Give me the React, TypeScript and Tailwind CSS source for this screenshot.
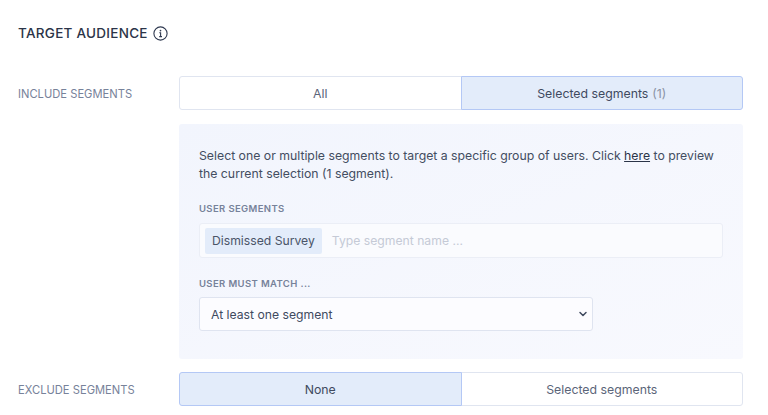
import { ChevronDown } from "lucide-react";

type ToggleOption = {
  label: string;
  count?: string;
  active?: boolean;
};

function Toggle({ options }: { options: ToggleOption[] }) {
  return (
    <div className="flex h-[34px] w-[564px]">
      {options.map((option, index) => (
        <div
          key={option.label}
          className={[
            "flex flex-1 items-center justify-center border pt-[2px] text-[12.3px]",
            index === 0 ? "rounded-l-[3px]" : "-ml-px rounded-r-[3px]",
            option.active
              ? "z-10 border-[#b4c8f5] bg-[#e3ecfa] text-[#3f4a5f]"
              : "border-[#e0e5f0] bg-white text-[#5b6579]",
          ].join(" ")}
        >
          {option.label}
          {option.count ? (
            <span className="ml-1 text-[#8a93a5]">{option.count}</span>
          ) : null}
        </div>
      ))}
    </div>
  );
}

function InfoIcon() {
  return (
    <svg width="15" height="15" viewBox="0 0 15 15" fill="none" className="text-[#2f3950]">
      <circle cx="7.5" cy="7.5" r="6.6" stroke="currentColor" strokeWidth="1.1" />
      <circle cx="7.5" cy="4.6" r="0.85" fill="currentColor" />
      <path d="M6.3 6.7H7.6V10.5M6.2 10.6H9" stroke="currentColor" strokeWidth="1.1" />
    </svg>
  );
}

export default function App() {
  return (
    <div className="h-[415px] w-[768px] overflow-hidden bg-white font-['Inter',sans-serif]">
      <div className="flex h-[76px] items-start pl-[18px] pt-[25px]">
        <h2 className="text-[13.5px] font-medium leading-4 tracking-[0.02em] text-[#2b3448]">
          TARGET AUDIENCE
        </h2>
        <span className="ml-[5px] mt-px">
          <InfoIcon />
        </span>
      </div>

      <div className="flex items-center">
        <div className="w-[179px] pl-[18px] pt-[2px] text-[11.2px] text-[#77829a]">
          INCLUDE SEGMENTS
        </div>
        <Toggle
          options={[
            { label: "All" },
            { label: "Selected segments", count: "(1)", active: true },
          ]}
        />
      </div>

      <div className="ml-[179px] mt-[14px] h-[235px] w-[564px] rounded-[3px] bg-linear-to-br from-[#f2f5fd] to-[#f8f9fe] px-5 pt-[23px]">
        <p className="text-[12.28px] leading-[18px] text-[#434d61]">
          Select one or multiple segments to target a specific group of users. Click{" "}
          <span className="text-[#2b3448] underline">here</span> to preview the current
          selection (1 segment).
        </p>

        <div className="mt-5 text-[9.5px] font-semibold leading-3 tracking-[0.04em] text-[#77829a]">
          USER SEGMENTS
        </div>
        <div className="mt-2 flex h-[35px] w-[524px] items-center rounded-[3px] border border-[#ebeef6] bg-[#fafbfe] pl-[5px]">
          <span className="flex h-[26px] items-center rounded-[2px] bg-[#e3ecfa] px-[7px] pt-px text-[12.2px] text-[#4a5468]">
            Dismissed Survey
          </span>
          <span className="ml-[10px] pt-px text-[12.2px] text-[#c5cad6]">Type segment name ...</span>
        </div>

        <div className="mt-5 text-[9.5px] font-semibold leading-3 tracking-[0.04em] text-[#77829a]">
          USER MUST MATCH ...
        </div>
        <div className="mt-[7px] flex h-[34px] w-[394px] items-center justify-between rounded-[3px] border border-[#dfe4f0] bg-[#fcfcff] pl-[11px] pr-[3px] text-[12.2px] text-[#3f4a5f]">
          <span className="pt-[2px]">At least one segment</span>
          <ChevronDown size={12} strokeWidth={3} className="text-[#3f4a5f]" />
        </div>
      </div>

      <div className="mt-[13px] flex items-center">
        <div className="w-[179px] pl-[18px] pt-[2px] text-[11.2px] text-[#77829a]">
          EXCLUDE SEGMENTS
        </div>
        <Toggle
          options={[
            { label: "None", active: true },
            { label: "Selected segments" },
          ]}
        />
      </div>
    </div>
  );
}
